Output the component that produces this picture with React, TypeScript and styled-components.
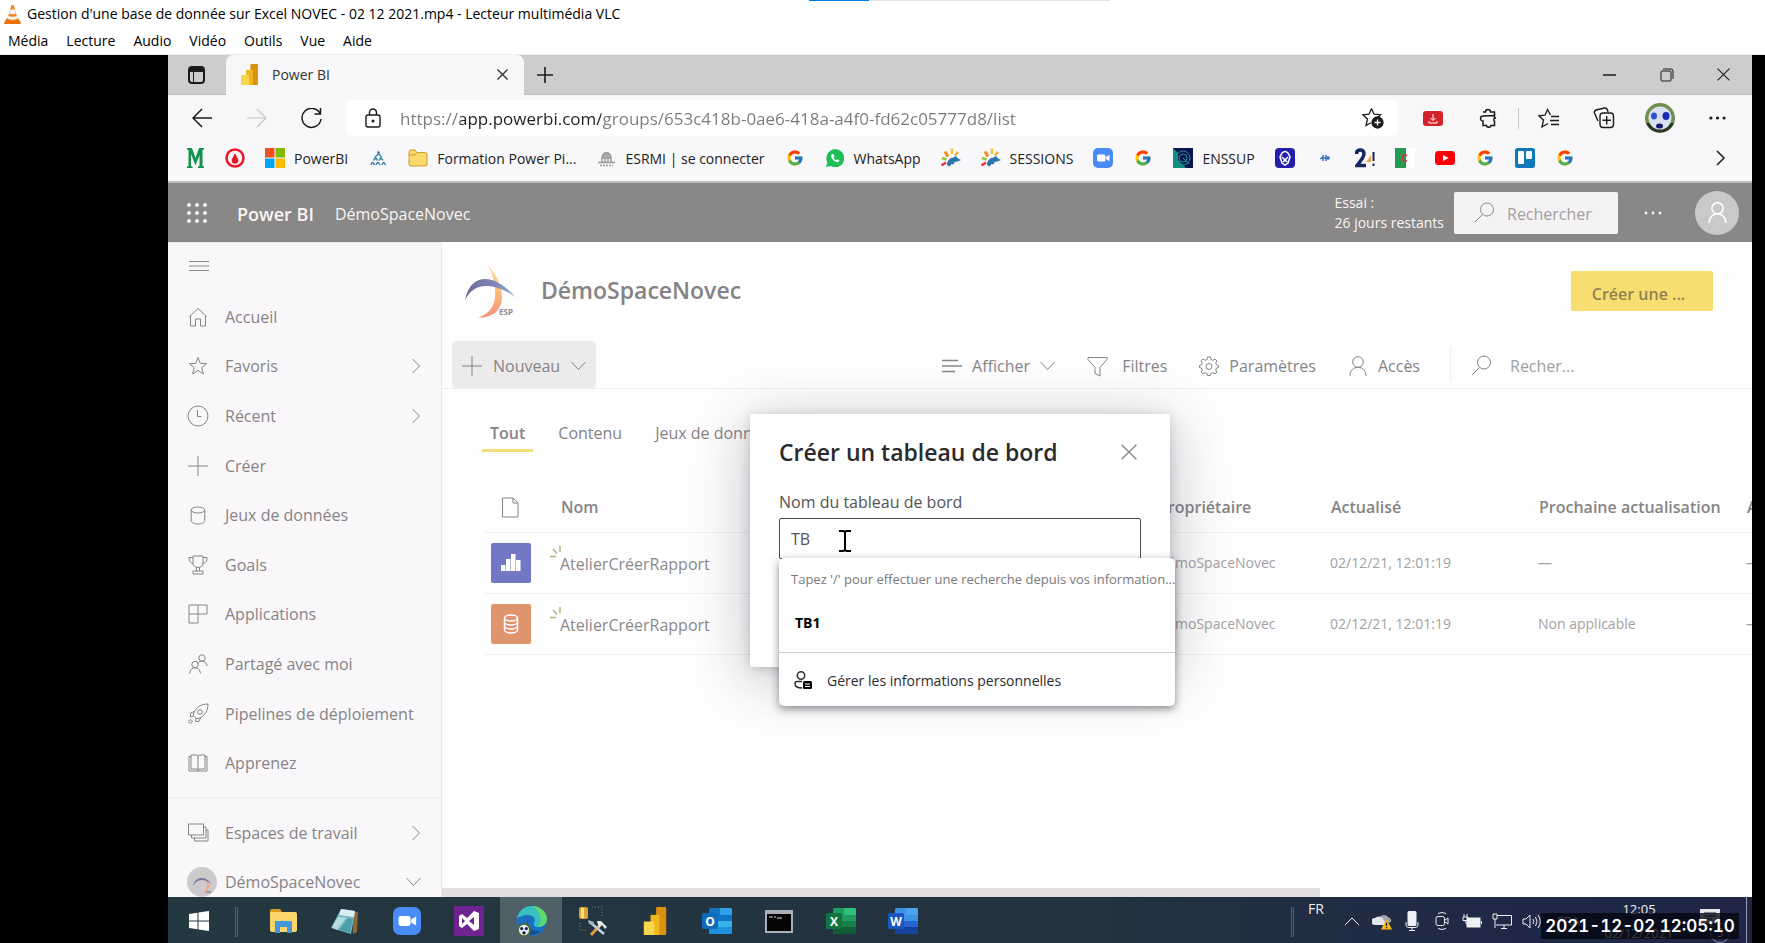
import React from "react";
import styled, { createGlobalStyle, css } from "styled-components";
import { FcGoogle } from "react-icons/fc";

const sans = '"Open Sans", "Noto Sans", sans-serif';

const GlobalStyle = createGlobalStyle`
  *, *::before, *::after { box-sizing: border-box; }
  html, body { margin: 0; height: 100%; }
  #root { height: 100%; }
  body { font-family: ${sans}; color: #1b1b1b; background: #fff; overflow: hidden; }
  button, input { font: inherit; color: inherit; }
  button { border: 0; background: none; padding: 0; }
  a { color: inherit; text-decoration: none; }
  ul, h1, h2, p { margin: 0; padding: 0; }
  ul { list-style: none; }
  svg { display: block; flex: none; }
`;

/* ---------- Player window ---------- */

const Player = styled.div`
  position: relative;
  display: flex;
  flex-direction: column;
  min-height: 100vh;
`;
const TitleBar = styled.header`
  display: flex;
  align-items: center;
  gap: 6px;
  height: 30px;
  padding: 0 0 2px 4px;
  font-size: 14px;
  line-height: 20px;
  color: #000;
  white-space: nowrap;
`;
const WindowTitle = styled.h1`
  font-size: 14px;
  font-weight: 400;
`;
const MenuBar = styled.nav`
  display: flex;
  gap: 18px;
  height: 25px;
  padding: 0 0 2px 8px;
  border-bottom: 1px solid #ececec;
  font-size: 14px;
  line-height: 20px;
  color: #000;
`;
const ShareProgress = styled.div`
  position: absolute;
  top: 0;
  left: 809px;
  width: 301px;
  height: 1px;
  background: linear-gradient(to right, #0078d7 20%, #e3e3e3 20%);
`;
const Stage = styled.main`
  flex: 1;
  display: flex;
  padding: 0 13px 0 168px;
  background: #000;
`;
const Screen = styled.div`
  position: relative;
  flex: 1;
  min-width: 0;
  display: flex;
  flex-direction: column;
`;

/* ---------- Browser ---------- */

const TabStrip = styled.div`
  display: flex;
  height: 40px;
  background: #cecccf;
  border-bottom: 1px solid #bfbdc0;
`;
const StripButton = styled.button<{ $w: number }>`
  width: ${(p) => p.$w}px;
  display: grid;
  place-items: center;
`;
const ActiveTab = styled.div`
  display: flex;
  align-items: center;
  width: 298px;
  height: 40px;
  padding: 0 16px 2px 15px;
  border-radius: 7px 7px 0 0;
  background: #f7f6f9;
  font-size: 14px;
  color: #333;
  gap: 14px;
`;
const Grow = styled.span`
  flex: 1;
`;
const Toolbar = styled.div`
  display: flex;
  align-items: center;
  height: 46px;
  padding: 0 6px 0 6px;
  background: #f7f6f9;
`;
const ToolButton = styled.button<{ $w?: number }>`
  width: ${(p) => p.$w ?? 55}px;
  height: 36px;
  display: grid;
  place-items: center;
`;
const AddressBar = styled.label`
  flex: 1;
  min-width: 0;
  display: flex;
  align-items: center;
  gap: 18px;
  height: 36px;
  margin-left: 7px;
  padding-left: 18px;
  border-radius: 5px;
  background: #fff;
`;
const AddressInput = styled.input`
  flex: 1;
  min-width: 0;
  height: 36px;
  padding: 0;
  border: 0;
  outline: 0;
  font-size: 17px;
  color: transparent;
  background: linear-gradient(to right, #7c7a7c 60px, #1f1f1f 60px, #1f1f1f 201px, #7c7a7c 201px);
  -webkit-background-clip: text;
  background-clip: text;
`;
const ToolDivider = styled.span`
  width: 1px;
  height: 21px;
  margin: 0 2px 0 9px;
  background: #c9c8ca;
`;
const Bookmarks = styled.nav`
  display: flex;
  align-items: center;
  gap: 20px;
  height: 42px;
  padding: 0 26px 6px 17px;
  border-bottom: 2px solid #bcbcbc;
  background: #f8f7f9;
  font-size: 14px;
  color: #222;
  white-space: nowrap;
`;
const Bookmark = styled.a`
  display: flex;
  align-items: center;
  gap: 9px;
`;
const BookmarkIcon = styled.span`
  width: 20px;
  display: grid;
  place-items: center;
`;

/* ---------- Power BI page ---------- */

const Page = styled.div`
  position: relative;
  flex: 1;
  min-height: 0;
  display: flex;
  flex-direction: column;
  background: #fefefe;
  color: #868487;
`;
const PageHeader = styled.header`
  display: flex;
  align-items: center;
  height: 59px;
  padding: 0 13px 0 19px;
  background: #8a8787;
  color: #f7f5f6;
  white-space: nowrap;
`;
const Brand = styled.strong`
  margin-left: 30px;
  padding-top: 2px;
  font-size: 18px;
  font-weight: 600;
`;
const Crumb = styled.span`
  margin-left: 21px;
  padding-top: 2px;
  font-size: 16px;
`;
const Trial = styled.p`
  margin: 0 10px 0 auto;
  font-size: 14px;
  line-height: 20px;
`;
const HeaderSearch = styled.label`
  display: flex;
  align-items: center;
  gap: 12px;
  width: 164px;
  height: 42px;
  padding-left: 20px;
  border-radius: 2px;
  background: #f5f2f4;
  color: #8a888a;
`;
const PlainInput = styled.input`
  flex: 1;
  min-width: 0;
  padding: 2px 0 0;
  border: 0;
  outline: 0;
  background: none;
  font-size: 16px;
  color: #868487;
  &::placeholder { color: #a19fa1; opacity: 1; }
`;
const Avatar = styled.button`
  width: 44px;
  height: 44px;
  margin-left: 8px;
  border-radius: 50%;
  background: #cac9ca;
  color: #fff;
  display: grid;
  place-items: center;
`;
const Body = styled.div`
  flex: 1;
  min-height: 0;
  display: flex;
`;
const Sidebar = styled.nav`
  width: 274px;
  display: flex;
  flex-direction: column;
  border-right: 1px solid #ece9ec;
  border-top: 1px solid #e9e7e9;
  background: #f9f7f9;
  font-size: 16px;
  white-space: nowrap;
`;
const Burger = styled.button`
  height: 49px;
  padding: 0 0 3px 21px;
  display: flex;
  align-items: center;
  color: #8a888a;
`;
const NavList = styled.ul<{ $fill?: boolean }>`
  display: flex;
  flex-direction: column;
  ${(p) =>
    p.$fill
      ? css`
          flex: 1;
          & > li { flex: 1; }
        `
      : css`
          height: 109px;
          & > li:first-child { height: 60px; margin-top: 9px; padding-top: 11px; border-top: 1px solid #efecef; }
          & > li:last-child { height: 40px; padding-top: 10px; }
        `}
`;
const NavLink = styled.a`
  height: 100%;
  display: flex;
  align-items: center;
  gap: 16px;
  padding: 0 20px 0 19px;
`;
const NavIcon = styled.span`
  width: 22px;
  display: grid;
  place-items: center;
`;
const Workspace = styled.section`
  flex: 1;
  min-width: 0;
  display: flex;
  flex-direction: column;
`;
const SpaceHead = styled.div`
  display: flex;
  align-items: center;
  height: 98px;
  padding: 0 39px 0 23px;
`;
const SpaceTitle = styled.h2`
  margin-left: 24px;
  padding-bottom: 2px;
  font-size: 23px;
  line-height: 32px;
  font-weight: 600;
  color: #858386;
`;
const CreateApp = styled.button`
  width: 142px;
  height: 40px;
  margin-left: auto;
  padding: 6px 7px 0 0;
  border-radius: 2px;
  background: #f8de71;
  font-size: 16px;
  font-weight: 600;
  color: #8f8352;
`;
const Commands = styled.div`
  display: flex;
  align-items: center;
  height: 49px;
  padding-left: 10px;
  border-bottom: 1px solid #efedef;
  font-size: 16px;
  white-space: nowrap;
`;
const NewButton = styled.button`
  display: flex;
  align-items: center;
  gap: 11px;
  width: 144px;
  height: 47px;
  padding: 3px 0 0 10px;
  border-radius: 4px;
  background: #edeaeb;
`;
const CommandGroup = styled.div`
  display: flex;
  align-items: center;
  gap: 32px;
  margin-left: auto;
  padding-top: 4px;
`;
const Command = styled.button`
  display: flex;
  align-items: center;
  gap: 10px;
`;
const ListSearch = styled.label`
  display: flex;
  align-items: center;
  gap: 18px;
  width: 302px;
  height: 34px;
  margin-left: 30px;
  padding: 2px 0 0 20px;
  border-left: 1px solid #efedef;
`;
const Tabs = styled.div`
  display: flex;
  gap: 17px;
  margin: 23px 0 29px 40px;
  font-size: 16px;
`;
const Tab = styled.button<{ $on?: boolean }>`
  height: 40px;
  padding: 4px 8px 0;
  border-bottom: 3px solid ${(p) => (p.$on ? "#f3de7c" : "transparent")};
  font-weight: ${(p) => (p.$on ? 600 : 400)};
  white-space: nowrap;
`;
const TableWrap = styled.div`
  flex: 1;
  margin-left: 42px;
  overflow: hidden;
`;
const Table = styled.table`
  width: calc(100% + 154px);
  table-layout: fixed;
  border-collapse: collapse;
  text-align: left;
  white-space: nowrap;
`;
const Th = styled.th<{ $w?: number }>`
  width: ${(p) => (p.$w ? p.$w + "px" : "auto")};
  height: 51px;
  padding: 2px 0 0 1px;
  border-bottom: 1px solid #f1eff1;
  font-size: 16px;
  font-weight: 600;
`;
const Td = styled.td<{ $name?: boolean }>`
  height: 61px;
  padding: ${(p) => (p.$name ? 2 : 0)}px 0 0;
  border-bottom: 1px solid #f1eff1;
  font-size: ${(p) => (p.$name ? 16 : 14)}px;
  color: ${(p) => (p.$name ? "#8b898c" : "#a3a1a4")};
`;
const ItemName = styled.a`
  position: relative;
`;
const NewMark = styled.svg`
  position: absolute;
  left: -10px;
  top: -7px;
`;
const Tile = styled.span<{ $bg: string }>`
  display: grid;
  place-items: center;
  width: 40px;
  height: 40px;
  margin-left: 7px;
  border-radius: 2px;
  background: ${(p) => p.$bg};
`;
const ScrollThumb = styled.div`
  width: 67%;
  height: 9px;
  background: #e2dde1;
`;

/* ---------- Dialog ---------- */

const Overlay = styled.div`
  position: absolute;
  inset: 0;
  display: grid;
  place-items: center;
`;
const Dialog = styled.form`
  width: 420px;
  min-height: 253px;
  padding: 22px 29px;
  border-radius: 2px;
  background: #fefefe;
  box-shadow: 0 10px 60px rgba(50, 40, 60, 0.3), 0 2px 12px rgba(50, 40, 60, 0.2);
`;
const DialogHead = styled.div`
  display: flex;
  align-items: center;
  justify-content: space-between;
  padding-right: 4px;
`;
const DialogTitle = styled.h2`
  font-size: 23px;
  line-height: 32px;
  font-weight: 600;
  color: #2b2a2c;
`;
const FieldLabel = styled.label`
  display: block;
  margin-top: 22px;
  font-size: 16px;
  line-height: 24px;
  color: #555356;
`;
const Field = styled.div`
  position: relative;
  margin-top: 4px;
`;
const NameInput = styled.input`
  width: 100%;
  height: 41px;
  padding: 2px 11px 0;
  border: 1px solid #4c4a4d;
  border-radius: 2px;
  outline: 0;
  background: #fefefe;
  font-size: 16px;
  color: #555;
`;
const IBeam = styled.svg`
  position: absolute;
  left: 59px;
  top: 12px;
`;
const Suggestions = styled.div`
  position: absolute;
  top: 40px;
  left: 0;
  width: 396px;
  border-radius: 5px;
  background: #fefefe;
  box-shadow: 0 3px 9px rgba(30, 30, 40, 0.5);
  font-size: 14px;
  white-space: nowrap;
`;
const Hint = styled.p`
  padding-left: 12px;
  line-height: 43px;
  font-size: 13px;
  color: #7b797c;
`;
const Suggestion = styled.button`
  display: block;
  width: 100%;
  height: 52px;
  padding: 0 0 7px 16px;
  border-bottom: 1px solid #cfcdd0;
  text-align: left;
  font-weight: 700;
  color: #000;
`;
const ManageInfo = styled.button`
  display: flex;
  align-items: center;
  gap: 15px;
  width: 100%;
  height: 53px;
  padding: 2px 0 0 15px;
  color: #2c2b2d;
`;

/* ---------- Taskbar ---------- */

const Taskbar = styled.footer`
  display: flex;
  height: 46px;
  background: linear-gradient(to right, #243841, #22323f 60%, #1f2846 85%, #1f2647);
  color: #eef0f4;
`;
const TaskButton = styled.button<{ $on?: boolean }>`
  width: 62px;
  display: grid;
  place-items: center;
  padding-top: 2px;
  background: ${(p) => (p.$on ? "#4f6068" : "none")};
`;
const Grip = styled.span`
  width: 3px;
  height: 30px;
  margin: 10px 14px 0 5px;
  border: 1px solid #53626c;
  border-width: 0 1px;
`;
const Lang = styled.span`
  width: 29px;
  padding-top: 2px;
  font-size: 14px;
  line-height: 20px;
`;
const TrayButton = styled.button`
  width: 30px;
  display: grid;
  place-items: center;
  padding-top: 2px;
`;
const Keyboard = styled.span`
  width: 54px;
  padding: 14px 0 0 10px;
  font-size: 13px;
  line-height: 20px;
`;
const Clock = styled.time`
  width: 76px;
  font-size: 13px;
  line-height: 24px;
  text-align: center;
`;
const Notices = styled.button`
  position: relative;
  width: 22px;
  margin: 0 25px 0 22px;
  padding-bottom: 4px;
`;
const NoticeCount = styled.span`
  position: absolute;
  right: -9px;
  bottom: 0;
  width: 20px;
  height: 20px;
  border: 1px solid #8a90a5;
  border-radius: 50%;
  font-size: 12px;
  line-height: 18px;
`;
const ShowDesktop = styled.span`
  width: 6px;
  border-left: 1px solid #9aa0b4;
`;
const Stamp = styled.div`
  position: absolute;
  right: 13px;
  bottom: 4px;
  width: 198px;
  height: 26px;
  background: rgba(4, 5, 14, 0.78);
  color: #fff;
  font: 600 17px/27px Inter, "Liberation Sans", sans-serif;
  font-variant-numeric: tabular-nums;
  text-align: center;
  white-space: nowrap;
`;

/* ---------- Drawings ---------- */

type IconProps = {
  s?: number;
  h?: number;
  box?: string;
  w?: number;
  color?: string;
  children: React.ReactNode;
};
const Icon = ({ s = 20, h, box, w = 1, color = "currentColor", children }: IconProps) => (
  <svg width={s} height={h ?? s} viewBox={box ?? `0 0 ${s} ${h ?? s}`} fill="none" stroke={color} strokeWidth={w} aria-hidden="true">
    {children}
  </svg>
);

const Cone = () => (
  <Icon s={17} h={19} color="none">
    <path d="M2.500 13.500h12L17 18q0 1-1 1H1q-1 0-1-1z" fill="#e8730c" />
    <path d="M7.500 0h2L14 15q-5.500 2.500-11 0z" fill="#f0851c" />
    <path d="M6.300 4.500h4.400l1.200 4q-3.400 1.400-6.800 0zM4.200 11q4.300 1.600 8.600 0l.8 2.800q-5.200 2-10.200 0z" fill="#f1f1f1" />
  </Icon>
);
const PowerBars = ({ s = 20 }: { s?: number }) => (
  <Icon s={s} h={s + 4} box="0 0 20 25" color="none">
    <rect x="11" y="0" width="9" height="25" rx="1" fill="#d9920e" />
    <path d="M6 7h8v18H6z" fill="#efb61d" />
    <path d="M0 13h7.500q2 0 2 2v10H0z" fill="#f9d74d" />
  </Icon>
);
const Cross = ({ s = 11, w = 1 }: { s?: number; w?: number }) => (
  <Icon s={s} box="0 0 12 12" w={w}>
    <path d="M.5.5l11 11M11.500.5l-11 11" />
  </Icon>
);
const Search = () => (
  <Icon s={21}>
    <circle cx="13" cy="7.500" r="6.500" />
    <path d="M8.500 12.500L1 20" />
  </Icon>
);
const Person = ({ s = 20, w = 1 }: { s?: number; w?: number }) => (
  <Icon s={s} box="0 0 20 20" w={w}>
    <circle cx="10" cy="6" r="5.300" />
    <path d="M2 20c0-5.500 3.500-8.700 8-8.700s8 3.200 8 8.700" />
  </Icon>
);
const ChevR = () => (
  <Icon s={10} h={16}>
    <path d="M1.500 1l7 7-7 7" />
  </Icon>
);
const ChevD = () => (
  <Icon s={15} h={10}>
    <path d="M.5 1l7 7.500 7-7.500" />
  </Icon>
);
const Plus = ({ s = 20, w = 1 }: { s?: number; w?: number }) => (
  <Icon s={s} box="0 0 20 20" w={w}>
    <path d="M10 0v20M0 10h20" />
  </Icon>
);
const Dots = ({ s = 18, r = 2 }: { s?: number; r?: number }) => (
  <Icon s={s} h={6} box="0 0 18 6" color="none">
    {[2, 9, 16].map((x) => (
      <circle key={x} cx={x} cy="3" r={r} fill="currentColor" />
    ))}
  </Icon>
);
const EspLogo = () => (
  <Icon s={52} h={53} box="0 0 52 53" color="none">
    <defs>
      <linearGradient id="flame" x1="0" y1="0" x2="0" y2="1">
        <stop offset="0" stopColor="#fce0a0" />
        <stop offset=".45" stopColor="#fbc37c" />
        <stop offset="1" stopColor="#f58f7c" />
      </linearGradient>
      <linearGradient id="arc" x1="0" y1="0" x2="1" y2="0">
        <stop offset="0" stopColor="#6d6a98" />
        <stop offset=".5" stopColor="#7d83b4" />
        <stop offset="1" stopColor="#8fb0cc" />
      </linearGradient>
    </defs>
    <path d="M23 0c8 9 14 21 14 32 0 13-9 21-24 20.500 10-3 16-10 17-20C31 21 28 10 23 0z" fill="url(#flame)" />
    <path d="M0 35C3 20 11 14 20 14c12 0 22 9 31 18.500C41 25 30 21 21 21 11 21 5 26 0 35z" fill="url(#arc)" />
    <text x="34" y="50" fontSize="8" fontWeight="700" fill="#8d8b95" fontFamily="Open Sans, sans-serif">
      ESP
    </text>
  </Icon>
);
const SpaceBadge = () => (
  <Icon s={30} color="none">
    <circle cx="15" cy="15" r="15" fill="#cdcacd" />
    <path d="M17 10c4 5 5 13-3 16 5 0 8-3 8-8 0-3-2-6-5-8z" fill="#f0a68d" />
    <path d="M6 19c1-6 5-8 9-8 4 0 7 3 10 6-4-2-7-4-10-4-4 0-7 2-9 6z" fill="#7579a0" />
    <path d="M19 25h5" stroke="#9a969c" strokeWidth="2" />
  </Icon>
);
const ZoomLogo = ({ s = 20, h = 20 }: { s?: number; h?: number }) => (
  <Icon s={s} h={h} box="0 0 20 20" color="none">
    <rect width="20" height="20" rx="5" fill="#4a8cf7" />
    <rect x="4" y="6.500" width="8.500" height="7" rx="1.500" fill="#fff" />
    <path d="M13 9l3.500-2.300v6.600L13 11z" fill="#fff" />
  </Icon>
);
const Chameleon = () => (
  <Icon s={20} w={2}>
    <path d="M7 8.500L4 3.500" stroke="#f28a1c" strokeWidth="3" />
    <path d="M11 6V.5" stroke="#f7c31c" strokeWidth="2.500" />
    <path d="M5.500 11.500L1 10" stroke="#8dc63f" strokeWidth="2.500" />
    <path d="M5 14.500l-4.500 3" stroke="#e8374a" strokeWidth="2.500" />
    <path d="M14 7.500l3-3.500" stroke="#f7a31c" />
    <path d="M6 17c0-4 3-7.500 6.500-7.500L15 8l2 2.500 3 1.500-3.500 1.500-3 .5-1 2.500-2-.5-2 2.500z" fill="#2f75ac" stroke="none" />
  </Icon>
);
const Ball = () => (
  <Icon s={30} color="none">
    <circle cx="15" cy="15" r="15" fill="#6d8f50" />
    <path d="M1 20a15 15 0 0 0 28 0z" fill="#2c3a24" />
    <circle cx="15" cy="15" r="11.500" fill="#d9def0" />
    <ellipse cx="9" cy="13" rx="3" ry="3.500" fill="#2f50d0" />
    <ellipse cx="21" cy="13" rx="3.500" ry="4" fill="#1a2bae" />
    <ellipse cx="14.500" cy="23" rx="3.500" ry="2.500" fill="#111a6c" />
  </Icon>
);
const Office = ({ letter, shades }: { letter: string; shades: string[] }) => (
  <Icon s={30} h={26} color="none">
    <rect x="7" y="0" width="23" height="26" rx="1.500" fill={shades[1]} />
    <path d="M18 0h10.500q1.500 0 1.500 1.500V7H18z" fill={shades[0]} />
    <path d="M7 13h23v6H7z" fill={shades[2]} />
    <path d="M7 19h23v5.500q0 1.500-1.500 1.500H8.500Q7 26 7 24.500z" fill={shades[3]} />
    <rect x="0" y="5" width="16" height="16" rx="1.500" fill={shades[4]} />
    <text x="8" y="17.500" fontSize="12" fontWeight="700" textAnchor="middle" fill="#fff" fontFamily="Open Sans, sans-serif">
      {letter}
    </text>
  </Icon>
);

const navIcons: Record<string, React.ReactNode> = {
  home: <Icon s={20}><path d="M1.500 9.500L10 1.500l8.500 8M2.500 8.500v10.500h5v-7h5v7h5V8.500" /></Icon>,
  star: <Icon s={20}><path d="M10 1.500l2.300 5.900 6.200.3-4.800 4 1.700 6.300-5.400-3.600L4.600 18l1.700-6.300-4.800-4 6.200-.3z" /></Icon>,
  clock: <Icon s={22}><circle cx="11" cy="11" r="10" /><path d="M10.500 5v6.500h4" /></Icon>,
  plus: <Plus />,
  data: <Icon s={16} h={19}><ellipse cx="8" cy="4" rx="6.800" ry="3" /><path d="M1.200 4v10.500c0 2 3 3.500 6.800 3.500s6.800-1.500 6.800-3.500V4" /></Icon>,
  goals: <Icon s={20}><path d="M5 1h10v7c0 3-2 4.500-5 4.500S5 11 5 8zM5 2.500H1c0 4 1.500 5.500 4 6M15 2.500h4c0 4-1.500 5.500-4 6M8.500 12.500v3.500M11.500 12.500v3.500M5 16h10v3H5z" /></Icon>,
  apps: <Icon s={20}><path d="M1 1h9v18H1zM10 1h9v9H1" /></Icon>,
  shared: <Icon s={20}><circle cx="14" cy="4" r="3.200" /><path d="M9.800 9.500c.8-1.500 2.300-2.300 4.200-2.300 2.800 0 4.700 2 5.200 4.800" /><circle cx="7" cy="10.500" r="3.200" /><path d="M1.500 19.500c.5-3.500 2.500-5.800 5.500-5.800s5 2 5.500 5.800" /></Icon>,
  rocket: <Icon s={21}><path d="M7 14.500c-2-2-2-2.500-1-5C8 4.500 13 1 20 1c0 7-3.500 12-8.500 14-2.500 1-3 1-4.500-.5zM6.500 8.500L2.500 10v4l3-.5M12.500 14.500L11 18.500l-3.500 0 .5-3" /><circle cx="12" cy="9" r="2.300" /><circle cx="2.500" cy="18.500" r="1.700" /></Icon>,
  book: <Icon s={20} h={18}><path d="M1 2.500h2M19 2.500h-2M1 2.500v14.500h18V2.500M3 1v14h5.500q1.500 0 1.500 1.500Q10 15 11.500 15H17V1h-5.500Q10 1 10 2.500 10 1 8.500 1zM10 2.500v14" /></Icon>,
  spaces: <Icon s={22} h={20}><path d="M1.500 1h15v11h-15zM16.500 4H19v11H4.500v-3M19 7h2v11H7.500v-3" /></Icon>,
};

const siteIcons = {
  m: <Icon s={17} h={20} color="none"><path d="M0 0h5l3.500 10L12 0h5v1.500l-1.500.5v16l1.500.5V20h-6v-1.500l1.500-.5V7L8.500 17.500 4 6v12l1.500.5V20H0v-1.500l1.500-.5V2L0 1.500z" fill="#15924e" /></Icon>,
  veolia: <Icon s={20} color="#ec1528" w={2.500}><circle cx="10" cy="10" r="8.500" /><path d="M10 6l1.800 4h-3.600z" fill="#ec1528" strokeWidth="1" /><circle cx="10" cy="12.500" r="3.300" fill="#ec1528" stroke="none" /></Icon>,
  ms: <Icon s={20} color="none"><path d="M0 0h9.500v9.500H0z" fill="#f25022" /><path d="M10.500 0H20v9.500h-9.500z" fill="#7fba00" /><path d="M0 10.500h9.500V20H0z" fill="#00a4ef" /><path d="M10.500 10.500H20V20h-9.500z" fill="#ffb900" /></Icon>,
  people: (
    <Icon s={17} h={15} color="none">
      <circle cx="8.500" cy="1.500" r="1.300" fill="#2d6fa3" /><circle cx="5.500" cy="6" r="1.200" fill="#3b93b5" /><circle cx="11" cy="6" r="1.200" fill="#56a9b5" />
      <path d="M6.500 5q2-4 4 0M3.500 9.500q2-4 4 0M9 9.500q2-4 4 0M1 14q1.500-5 3.500 0M6 14q1.500-5 4 0M12 14q1.500-5 3.500 0" stroke="#3d7fa8" strokeWidth="1.500" />
    </Icon>
  ),
  folder: <Icon s={20} h={18} color="#c99b27"><path d="M1 3q0-2 2-2h4l2 2.500h8q2 0 2 2V15q0 2-2 2H3q-2 0-2-2z" fill="#fbd96d" /><path d="M1 6h6l2-2.500" /></Icon>,
  dome: <Icon s={19} h={17} w={1.500} color="#9a9a9a"><path d="M5 8a4.500 5.500 0 0 1 9 0z" fill="#a9a9a9" /><path d="M5 8v4M8 8v4M11 8v4M14 8v4M1 12.500h17" /><path d="M3 15.500h13" strokeDasharray="2 1" /></Icon>,
  whatsapp: <Icon s={18} color="none"><path d="M0 18l1.300-4.600A9 9 0 1 1 4.700 17z" fill="#1fbf58" /><path d="M6 5c-1 .8-1.300 2-.6 3.600 1 2.200 2.700 3.800 5 4.500 1.500.4 2.700-.3 3-1.600l-2-1.200-1.200 1c-1.200-.5-2.100-1.400-2.600-2.500l.9-1L7.600 5z" fill="#fff" /></Icon>,
  radar: <Icon s={20} color="#1fa396"><path d="M0 0h20v20H0z" fill="#0c1450" stroke="none" /><path d="M0 0l5 5v7l8 8H0z" fill="#13907d" stroke="none" /><circle cx="10" cy="10" r="7" stroke="#2b8e96" /><circle cx="10" cy="10" r="4" stroke="#2b8e96" /><path d="M10 10l6 6" /></Icon>,
  shield: <Icon s={20} color="#fff" w={1.500}><rect width="20" height="20" rx="4" fill="#251fae" stroke="none" /><path d="M7 5q3-3 6 0l2 4-2 6-3 2-3-2-2-6zM7 9l3 3 3-3M8 14l2-2 2 2" /></Icon>,
  spark: <Icon s={20} color="#3a6fc0" w={1.500}><path d="M6 10h9M8 7v6M11 7v6M13 8v4M5 11l3-2" /></Icon>,
  two: <Icon s={20} color="#16275b" w={3.500}><path d="M1.500 6q0-4 3.700-4T9 6q0 3-7 11.500h9" /><path d="M16 7l-4.500 7H16z" fill="#e9a23a" stroke="none" /><path d="M18.500 4v9M18.500 15.500V18" strokeWidth="2" /></Icon>,
  flag: <Icon s={20} color="none"><path d="M10 0h10v20H10z" fill="#fff" /><path d="M0 0h11v20H0z" fill="#249a50" /><path d="M12 7.500a3 3 0 1 0 0 5" stroke="#d22f42" strokeWidth="1.500" /></Icon>,
  youtube: <Icon s={20} h={14} color="none"><rect width="20" height="14" rx="3.500" fill="#fb0007" /><path d="M8 4l5.500 3L8 10z" fill="#fff" /></Icon>,
  trello: <Icon s={20} color="none"><rect width="20" height="20" rx="2.500" fill="#0f78bb" /><rect x="3" y="3" width="6" height="13" rx="1" fill="#fff" /><rect x="11" y="3" width="6" height="8" rx="1" fill="#fff" /></Icon>,
  google: <FcGoogle size={18} />,
};

const bookmarks: { icon: React.ReactNode; text?: string; name?: string }[] = [
  { icon: siteIcons.m, name: "M" },
  { icon: siteIcons.veolia, name: "Veolia" },
  { icon: siteIcons.ms, text: "PowerBI" },
  { icon: siteIcons.people, name: "Équipe" },
  { icon: siteIcons.folder, text: "Formation Power Pi..." },
  { icon: siteIcons.dome, text: "ESRMI | se connecter" },
  { icon: siteIcons.google, name: "Google" },
  { icon: siteIcons.whatsapp, text: "WhatsApp" },
  { icon: <Chameleon />, name: "Sessions" },
  { icon: <Chameleon />, text: "SESSIONS" },
  { icon: <ZoomLogo />, name: "Zoom" },
  { icon: siteIcons.google, name: "Google" },
  { icon: siteIcons.radar, text: "ENSSUP" },
  { icon: siteIcons.shield, name: "Portail" },
  { icon: siteIcons.spark, name: "Outils" },
  { icon: siteIcons.two, name: "24" },
  { icon: siteIcons.flag, name: "Algérie" },
  { icon: siteIcons.youtube, name: "YouTube" },
  { icon: siteIcons.google, name: "Google" },
  { icon: siteIcons.trello, name: "Trello" },
  { icon: siteIcons.google, name: "Google" },
];

const navItems: { icon: string; text: string; more?: boolean }[] = [
  { icon: "home", text: "Accueil" },
  { icon: "star", text: "Favoris", more: true },
  { icon: "clock", text: "Récent", more: true },
  { icon: "plus", text: "Créer" },
  { icon: "data", text: "Jeux de données" },
  { icon: "goals", text: "Goals" },
  { icon: "apps", text: "Applications" },
  { icon: "shared", text: "Partagé avec moi" },
  { icon: "rocket", text: "Pipelines de déploiement" },
  { icon: "book", text: "Apprenez" },
];

const taskIcons: { name: string; on?: boolean; icon: React.ReactNode }[] = [
  {
    name: "Explorateur",
    icon: (
      <Icon s={27} h={24} color="none">
        <path d="M0 2q0-2 2-2h8l2 3H0z" fill="#d99b1d" />
        <path d="M0 3h25q2 0 2 2v16q0 2-2 2H2q-2 0-2-2z" fill="#fbd56a" />
        <path d="M5 12h17v12h-5v-6h-7v6H5z" fill="#4397dd" />
      </Icon>
    ),
  },
  {
    name: "Bloc-notes",
    icon: (
      <Icon s={28} h={27} color="none">
        <path d="M21 4l6 0-1 20-4 2z" fill="#8d6a34" />
        <path d="M10 1l14 2-4 23L0 20z" fill="#79bcc4" />
        <path d="M10 1l14 2-1 6L8 7z" fill="#d8eef0" />
        <path d="M7 9l8 1-9 12L1 19z" fill="#b4dde0" />
        <path d="M17 10l5 1-3 14-11-3z" fill="#4f9faa" />
      </Icon>
    ),
  },
  { name: "Zoom", icon: <ZoomLogo s={28} h={28} /> },
  {
    name: "Visual Studio",
    icon: (
      <Icon s={30} color="none">
        <path d="M0 0h30v30H0z" fill="#6f2390" />
        <path d="M5 10l3-2 5 4 7-7 5 2v16l-5 2-7-7-5 4-3-2zM8 12v6l3-3zM20 11l-5 4 5 4z" fill="#fff" fillRule="evenodd" />
      </Icon>
    ),
  },
  {
    name: "Edge",
    on: true,
    icon: (
      <Icon s={31} h={31} color="none">
        <circle cx="15.500" cy="15" r="15" fill="#1b6fc0" />
        <path d="M1 12C3 4 9 0 16 0c8 0 15 6 15 13 0 5-4 8-9 8-4 0-5-2-4-4 2-3 0-8-6-8-5 0-9 2-11 3z" fill="#37bfc2" />
        <path d="M16 0c8 0 15 6 15 13 0 5-4 8-9 8 5-6 3-15-6-21z" fill="#5fd66e" />
        <path d="M12 12c-3 6 2 14 12 13-4 4-9 5-13 3z" fill="#12508f" />
        <svg x="1" y="17" width="14" height="14" viewBox="0 0 30 30">
          <circle cx="15" cy="15" r="15" fill="#4b6b34" />
          <circle cx="15" cy="15" r="11" fill="#e8ebf6" />
          <circle cx="10" cy="12" r="3.500" fill="#222a55" />
          <circle cx="20" cy="12" r="3.500" fill="#222a55" />
          <circle cx="15" cy="21" r="3.500" fill="#11163a" />
        </svg>
      </Icon>
    ),
  },
  {
    name: "Outils SQL",
    icon: (
      <Icon s={29} h={30} color="none">
        <rect x="0" y="1" width="9" height="12" rx="2" fill="#e0a32e" />
        <path d="M2 2h3v10H2z" fill="#fbe29a" />
        <path d="M13 1h10v10M1 17v7h8" stroke="#6d8f6a" strokeDasharray="1 2" />
        <path d="M12 29L21 19" stroke="#e09b3d" strokeWidth="3" />
        <path d="M12 17l13 11" stroke="#c4ccd4" strokeWidth="2.500" />
        <path d="M9 14l1 4 4 1 1-3-3-1z" fill="#aeb8c2" />
        <path d="M18 15l4 0 6 6-2 2-3-4-3 3z" fill="#e6eaee" />
      </Icon>
    ),
  },
  { name: "Power BI", icon: <PowerBars s={24} /> },
  { name: "Outlook", icon: <Office letter="O" shades={["#2ea3e8", "#1372c4", "#35b1ec", "#1f8fe0", "#0f6cbd"]} /> },
  {
    name: "Invite de commandes",
    icon: (
      <Icon s={28} h={23} color="#a9afb4" w={2}>
        <rect x="1" y="1" width="26" height="21" fill="#050505" />
        <path d="M2 4V2h24v2z" fill="#a9afb4" stroke="none" />
        <path d="M4 7h4M9 7h2M12 8h5" strokeWidth="1" stroke="#d5d8da" />
      </Icon>
    ),
  },
  { name: "Excel", icon: <Office letter="X" shades={["#2fbf7a", "#1f9d60", "#17804a", "#125c37", "#107540"]} /> },
  { name: "Word", icon: <Office letter="W" shades={["#4ba5ee", "#3d92e6", "#2566cc", "#16419f", "#1a56c0"]} /> },
];

const tray: { name: string; icon: React.ReactNode }[] = [
  { name: "Icônes cachées", icon: <Icon s={16} h={10}><path d="M1 9l7-7 7 7" /></Icon> },
  {
    name: "OneDrive",
    icon: (
      <Icon s={20} h={18} color="none">
        <path d="M7 8a5 5 0 0 1 9-3 4 4 0 0 1 3 5L12 12z" fill="#9fa5ae" />
        <path d="M3 13a3.500 3.500 0 0 1 0-7 5 5 0 0 1 8 1l4 6z" fill="#e2e5e9" />
        <path d="M14.500 7l5.500 10.500H9z" fill="#fbb917" />
        <path d="M14.500 10.500v3.500M14.500 15v1.200" stroke="#222" strokeWidth="1.300" />
      </Icon>
    ),
  },
  { name: "Micro", icon: <Icon s={14} h={20}><rect x="3" y=".5" width="8" height="14" rx="1" fill="currentColor" /><path d="M1 11v3q0 2.500 3 2.500h6q3 0 3-2.500v-3M7 16.500V19M4 19.500h6" /></Icon> },
  { name: "Caméra", icon: <Icon s={14} h={20}><rect x="1" y="5.500" width="8.500" height="9" rx="2" /><path d="M10 9l3-2v6l-3-2M3 2.500q4-2 8 0M3 17.500q4 2 8 0" /></Icon> },
  { name: "Batterie", icon: <Icon s={20} h={15}><rect x="5" y="4" width="13" height="9" fill="currentColor" /><path d="M19.500 7v3M1 3h5v3.500H1zM2 0v3M5 0v3M3.500 6.500q0 4 2 4" /></Icon> },
  { name: "Réseau", icon: <Icon s={20} h={17}><path d="M5 2.500h14.500v9.500H4M1 1h4v5H1zM3 6v9M9 15.500h6M12 12v3.500" /></Icon> },
  { name: "Volume", icon: <Icon s={20} h={15}><path d="M1 5h3l4-4v13l-4-4H1zM11 5q1.500 2.500 0 5M13.500 3q3 4.500 0 9M16 1q4.500 6.500 0 13" /></Icon> },
];

const rows = [
  { kind: "report", next: "—" },
  { kind: "dataset", next: "Non applicable" },
];

/* ---------- Views ---------- */

const Browser = () => (
  <>
    <TabStrip>
      <StripButton $w={58} aria-label="Menu des onglets">
        <Icon s={18} w={2}><rect x="1" y="1" width="15" height="16" rx="3" /><path d="M1 4h15" strokeWidth="4" /><path d="M5.500 5v12" strokeWidth="1" /></Icon>
      </StripButton>
      <ActiveTab>
        <PowerBars s={17} />
        Power BI
        <Grow />
        <button aria-label="Fermer l'onglet"><Cross s={11} w={1.500} /></button>
      </ActiveTab>
      <StripButton $w={42} aria-label="Nouvel onglet"><Plus s={16} w={2} /></StripButton>
      <Grow />
      <StripButton $w={57} aria-label="Réduire"><Icon s={13} h={2}><path d="M0 1h13" strokeWidth="1.500" /></Icon></StripButton>
      <StripButton $w={57} aria-label="Agrandir"><Icon s={14}><rect x="1" y="3" width="10" height="10" rx="1" /><path d="M3 1h8q2 0 2 2v8" /></Icon></StripButton>
      <StripButton $w={57} aria-label="Fermer"><Cross s={13} /></StripButton>
    </TabStrip>
    <Toolbar>
      <ToolButton aria-label="Retour"><Icon s={20} w={1.500}><path d="M20 10H1.500M10 1L1 10l9 9" /></Icon></ToolButton>
      <ToolButton aria-label="Suivant"><Icon s={20} w={1.200} color="#c6c5c8"><path d="M0 10h18.500M10 1l9 9-9 9" /></Icon></ToolButton>
      <ToolButton aria-label="Actualiser"><Icon s={21} w={1.500}><path d="M19 5.500A9.500 9.500 0 1 0 20 11M19.500 0v6h-6" /></Icon></ToolButton>
      <AddressBar>
        <Icon s={18} h={20} w={1.400}><rect x="2" y="7" width="14" height="12" rx="2" /><path d="M5.500 7V4.500a3.500 3.500 0 0 1 7 0V7" /><circle cx="9" cy="13" r=".8" fill="currentColor" /></Icon>
        <AddressInput aria-label="Adresse" readOnly value="https://app.powerbi.com/groups/653c418b-0ae6-418a-a4f0-fd62c05777d8/list" />
        <ToolButton $w={50} type="button" aria-label="Ajouter aux favoris">
          <Icon s={22} w={1.300}><path d="M9.500 1.500l2.500 5.700 6.500.5-4.500 4.500M9.500 1.500L7 7.200l-6.200.6L5.500 12l-1.500 6.500 5-2.800" /><circle cx="15.500" cy="15.500" r="5.500" fill="currentColor" /><path d="M15.500 12.500v6M12.500 15.500h6" stroke="#fff" /></Icon>
        </ToolButton>
      </AddressBar>
      <ToolButton $w={69} aria-label="Téléchargements vidéo">
        <Icon s={20} h={15} color="#fff"><rect width="20" height="15" rx="3" fill="#d3232b" stroke="none" /><path d="M10 3v6M7.500 7L10 9.500 12.500 7M6 10v2h8v-2" /></Icon>
      </ToolButton>
      <ToolButton $w={42} aria-label="Extensions">
        <Icon s={20} w={1.500}><path d="M5 4h2.500a2.500 2.500 0 0 1 5 0H16.500V7.500M16.500 7.500a1.700 1.700 0 0 0 1.500 2.500 1.700 1.700 0 0 0-1.500 3V17.500H13a2.300 2.300 0 0 1-4.500 0H5V13a2.500 2.500 0 0 1 0-5z" /></Icon>
      </ToolButton>
      <ToolDivider />
      <ToolButton aria-label="Favoris">
        <Icon s={21} w={1.300}><path d="M12.500 7L9.500 1.500 7 7.200l-6.200.6L5.500 12l-1.500 7 6-3.500M13 8.500h8M12 12.500h9M13 16.500h8" /></Icon>
      </ToolButton>
      <ToolButton aria-label="Collections">
        <Icon s={22} w={1.400}><rect x="7" y="6" width="13.500" height="14.500" rx="3" /><path d="M5 14L1.500 6q-.7-2 1.500-3l8.500-2q2-.4 3 2l.5 2M13.700 9v8.500M9.500 13.200H18" /></Icon>
      </ToolButton>
      <ToolButton $w={58} aria-label="Profil"><Ball /></ToolButton>
      <ToolButton $w={57} aria-label="Paramètres et plus"><Dots s={17} r={1.700} /></ToolButton>
    </Toolbar>
    <Bookmarks aria-label="Favoris">
      {bookmarks.map((b, i) => (
        <Bookmark key={i} href="#" aria-label={b.text ?? b.name}>
          <BookmarkIcon>{b.icon}</BookmarkIcon>
          {b.text}
        </Bookmark>
      ))}
      <Grow />
      <button aria-label="Autres favoris"><Icon s={10} h={16} w={1.600}><path d="M1 1l7 7-7 7" /></Icon></button>
    </Bookmarks>
  </>
);

const SideNav = () => (
  <Sidebar aria-label="Navigation">
    <Burger aria-label="Menu"><Icon s={20} h={12}><path d="M0 1.500h20M0 6h20M0 10.500h20" /></Icon></Burger>
    <NavList $fill>
      {navItems.map((n) => (
        <li key={n.text}>
          <NavLink href="#">
            <NavIcon>{navIcons[n.icon]}</NavIcon>
            {n.text}
            {n.more && <><Grow /><ChevR /></>}
          </NavLink>
        </li>
      ))}
    </NavList>
    <NavList>
      <li>
        <NavLink href="#"><NavIcon>{navIcons.spaces}</NavIcon>Espaces de travail<Grow /><ChevR /></NavLink>
      </li>
      <li>
        <NavLink href="#"><NavIcon><SpaceBadge /></NavIcon>DémoSpaceNovec<Grow /><ChevD /></NavLink>
      </li>
    </NavList>
  </Sidebar>
);

const Content = () => (
  <Workspace>
    <SpaceHead>
      <EspLogo />
      <SpaceTitle>DémoSpaceNovec</SpaceTitle>
      <CreateApp>Créer une ...</CreateApp>
    </SpaceHead>
    <Commands>
      <NewButton><Plus />Nouveau<ChevD /></NewButton>
      <CommandGroup>
        <Command><Icon s={20} h={14}><path d="M0 1.500h16M0 7h20M0 12.500h13" strokeWidth="1.500" /></Icon>Afficher<ChevD /></Command>
        <Command><Icon s={21}><path d="M1 1.500h19v2l-7 8V20l-5-2.500v-6l-7-8z" /></Icon>&nbsp;Filtres</Command>
        <Command>
          <Icon s={20}><path d="M8.500 1h3l.5 2.500 1.800.8L16 3l2 2-1.300 2.200.8 1.800 2 .5v2l-2 .5-.8 2L18 16l-2 2-2.200-1.400-1.800.8-.5 2.200h-3L8 17.400l-1.800-.8L4 18l-2-2 1.300-2-.8-2-2-.5v-2l2-.5.8-1.800L2 5l2-2 2.200 1.300L8 3.500z" /><circle cx="10" cy="10.500" r="3" /></Icon>
          Paramètres
        </Command>
        <Command><Person />Accès</Command>
      </CommandGroup>
      <ListSearch><Search /><PlainInput placeholder="Recher..." aria-label="Rechercher dans la liste" /></ListSearch>
    </Commands>
    <Tabs>
      <Tab $on>Tout</Tab>
      <Tab>Contenu</Tab>
      <Tab>Jeux de données</Tab>
    </Tabs>
    <TableWrap>
      <Table>
        <thead>
          <tr>
            <Th $w={76} aria-label="Type"><Icon s={52} h={21} box="-16 0 52 21"><path d="M1.500 1h10.500l5 5v14h-15.500zM12 1v5h5" /></Icon></Th>
            <Th>Nom</Th>
            <Th $w={173}>Propriétaire</Th>
            <Th $w={208}>Actualisé</Th>
            <Th $w={208}>Prochaine actualisation</Th>
            <Th $w={160}>A</Th>
          </tr>
        </thead>
        <tbody>
          {rows.map((r) => (
            <tr key={r.kind}>
              <Td>
                {r.kind === "report" ? (
                  <Tile $bg="#7378c5"><Icon s={20} h={17} color="none"><path d="M0 11h4.500v6H0zM5 5h4.500v12H5zM10 0h4.500v17H10zM15 6h4.500v11H15z" fill="#fff" /></Icon></Tile>
                ) : (
                  <Tile $bg="#e0946e"><Icon s={16} h={20} color="#fff" w={1.500}><ellipse cx="8" cy="4" rx="6.500" ry="3" /><path d="M1.500 4v12c0 1.700 3 3 6.500 3s6.500-1.300 6.500-3V4M1.500 8c0 1.700 3 3 6.500 3s6.500-1.300 6.500-3M1.500 12c0 1.700 3 3 6.500 3s6.500-1.300 6.500-3" /></Icon></Tile>
                )}
              </Td>
              <Td $name>
                <ItemName href="#">
                  <NewMark width="12" height="12" viewBox="0 0 12 12" stroke="#b3b27b" strokeWidth="1.500" aria-hidden="true"><path d="M10 0v6M3 3l4 4.500M0 10.500h6" /></NewMark>
                  AtelierCréerRapport
                </ItemName>
              </Td>
              <Td>DémoSpaceNovec</Td>
              <Td>02/12/21, 12:01:19</Td>
              <Td>{r.next}</Td>
              <Td>—</Td>
            </tr>
          ))}
        </tbody>
      </Table>
    </TableWrap>
    <ScrollThumb />
  </Workspace>
);

const CreateDialog = () => (
  <Overlay>
    <Dialog role="dialog" aria-labelledby="dialog-title">
      <DialogHead>
        <DialogTitle id="dialog-title">Créer un tableau de bord</DialogTitle>
        <button type="button" aria-label="Fermer"><Cross s={16} /></button>
      </DialogHead>
      <FieldLabel htmlFor="board-name">Nom du tableau de bord</FieldLabel>
      <Field>
        <NameInput id="board-name" defaultValue="TB" />
        <IBeam width="14" height="22" viewBox="0 0 14 22" fill="none" stroke="#000" strokeWidth="2" aria-hidden="true"><path d="M1 1h4q2 0 2 2 0-2 2-2h4M7 3v16M1 21h4q2 0 2-2 0 2 2 2h4" /></IBeam>
        <Suggestions>
          <Hint>Tapez '/' pour effectuer une recherche depuis vos information...</Hint>
          <Suggestion type="button">TB1</Suggestion>
          <ManageInfo type="button">
            <Icon s={18} w={1.500}><circle cx="7" cy="4.500" r="3.700" /><path d="M8 10.500H3q-2 0-2 2Q1 17 8 17" /><rect x="9" y="10" width="9" height="8" rx="1.500" fill="#000" stroke="none" /><path d="M11 13h5M11 15.500h5" stroke="#fff" strokeWidth="1" /></Icon>
            Gérer les informations personnelles
          </ManageInfo>
        </Suggestions>
      </Field>
    </Dialog>
  </Overlay>
);

export default function App() {
  return (
    <>
      <GlobalStyle />
      <Player>
        <TitleBar><Cone /><WindowTitle>Gestion d'une base de donnée sur Excel NOVEC - 02 12 2021.mp4 - Lecteur multimédia VLC</WindowTitle></TitleBar>
        <MenuBar>
          {["Média", "Lecture", "Audio", "Vidéo", "Outils", "Vue", "Aide"].map((m) => (
            <button key={m}>{m}</button>
          ))}
        </MenuBar>
        <ShareProgress />
        <Stage>
          <Screen>
            <Browser />
            <Page>
              <PageHeader>
                <Icon s={20} color="none">
                  {[2, 10, 18].map((y) => [2, 10, 18].map((x) => <circle key={`${x}-${y}`} cx={x} cy={y} r="2" fill="currentColor" />))}
                </Icon>
                <Brand>Power BI</Brand>
                <Crumb>DémoSpaceNovec</Crumb>
                <Trial>Essai :<br />26 jours restants</Trial>
                <HeaderSearch><Search /><PlainInput placeholder="Rechercher" aria-label="Rechercher" /></HeaderSearch>
                <ToolButton $w={69} aria-label="Plus"><Dots s={18} r={1.400} /></ToolButton>
                <Avatar aria-label="Compte"><Person s={21} w={1.500} /></Avatar>
              </PageHeader>
              <Body>
                <SideNav />
                <Content />
              </Body>
              <CreateDialog />
            </Page>
            <Taskbar>
              <TaskButton aria-label="Démarrer">
                <Icon s={20} color="none"><path d="M0 3l8.500-1.300v7.800H0zM9.500 1.500L20 0v9.500H9.500zM0 10.500h8.500v7.800L0 17zM9.500 10.500H20V20L9.500 18.500z" fill="#fff" /></Icon>
              </TaskButton>
              <Grip />
              {taskIcons.map((t) => (
                <TaskButton key={t.name} $on={t.on} aria-label={t.name}>{t.icon}</TaskButton>
              ))}
              <Grow />
              <Grip />
              <Lang>FR</Lang>
              {tray.map((t) => (
                <TrayButton key={t.name} aria-label={t.name}>{t.icon}</TrayButton>
              ))}
              <Keyboard>FRA</Keyboard>
              <Clock>12:05<br />02/12/2021</Clock>
              <Notices aria-label="Notifications">
                <Icon s={22} h={20} color="none"><path d="M1 1h20v14h-6l-4 4v-4H1z" fill="#e6e7ec" /><path d="M5 5h12M5 8h12M5 11h8" stroke="#1f2647" /></Icon>
                <NoticeCount>5</NoticeCount>
              </Notices>
              <ShowDesktop />
            </Taskbar>
            <Stamp>2021-12-02 12:05:10</Stamp>
          </Screen>
        </Stage>
      </Player>
    </>
  );
}
